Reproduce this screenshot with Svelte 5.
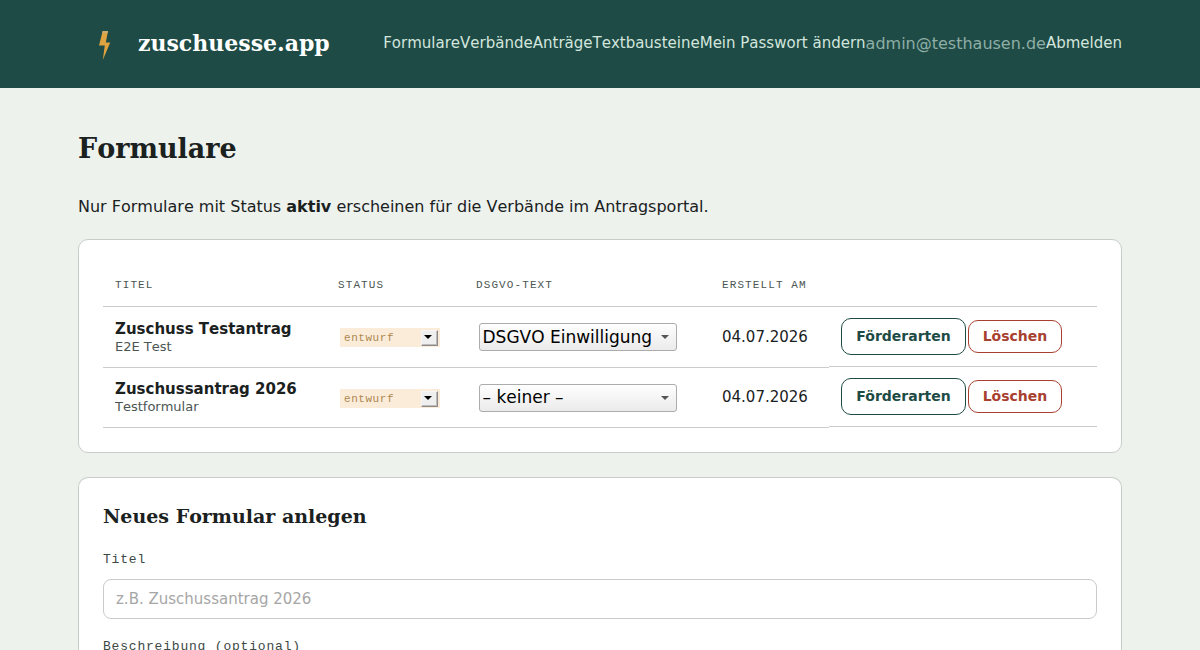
<script lang="ts">
  type Formular = {
    titel: string;
    beschreibung: string;
    status: string;
    dsgvo: string;
    erstellt: string;
  };

  const links = ['Formulare', 'Verbände', 'Anträge', 'Textbausteine', 'Mein Passwort ändern'];
  const stati = ['entwurf', 'aktiv', 'archiviert'];
  const texte = ['– keiner –', 'DSGVO Einwilligung'];

  let formulare: Formular[] = $state([
    {
      titel: 'Zuschuss Testantrag',
      beschreibung: 'E2E Test',
      status: 'entwurf',
      dsgvo: 'DSGVO Einwilligung',
      erstellt: '04.07.2026',
    },
    {
      titel: 'Zuschussantrag 2026',
      beschreibung: 'Testformular',
      status: 'entwurf',
      dsgvo: '– keiner –',
      erstellt: '04.07.2026',
    },
  ]);
  let titel = $state('');

  function loeschen(f: Formular) {
    formulare = formulare.filter((x) => x !== f);
  }
</script>

<header>
  <a class="brand" href="#top">
    <svg class="bolt" width="52" height="52" viewBox="0 0 52 52" aria-hidden="true">
      <path d="M24.7 13H30L27.8 24.6H32.2L24.8 42L26.8 27.4H21Z" fill="#e0a341" />
      <path d="M24.7 13H30L29.6 15H24.2Z" fill="#c9ad72" />
    </svg>
    <span class="name">zuschuesse.app</span>
  </a>
  <nav>
    {#each links as link}
      <a href="#top">{link}</a>
    {/each}
    <span class="user">admin@testhausen.de</span>
    <a href="#top">Abmelden</a>
  </nav>
</header>

<main>
  <h1>Formulare</h1>
  <p class="intro">Nur Formulare mit Status <strong>aktiv</strong> erscheinen für die Verbände im Antragsportal.</p>

  <section class="card list">
    <div class="row head">
      <span>Titel</span>
      <span>Status</span>
      <span>DSGVO-Text</span>
      <span>Erstellt am</span>
      <span></span>
    </div>
    {#each formulare as f}
      <div class="row">
        <div class="cell title">
          <strong>{f.titel}</strong>
          <small>{f.beschreibung}</small>
        </div>
        <div class="cell">
          <div class="status">
            <select bind:value={f.status} aria-label="Status">
              {#each stati as s}<option>{s}</option>{/each}
            </select>
            <span class="drop"><i></i></span>
          </div>
        </div>
        <div class="cell">
          <div class="dsgvo">
            <select bind:value={f.dsgvo} aria-label="DSGVO-Text">
              {#each texte as t}<option>{t}</option>{/each}
            </select>
            <i></i>
          </div>
        </div>
        <div class="cell date">{f.erstellt}</div>
        <div class="cell actions">
          <button class="btn">Förderarten</button>
          <button class="btn danger" onclick={() => loeschen(f)}>Löschen</button>
        </div>
      </div>
    {/each}
  </section>

  <section class="card form">
    <h2>Neues Formular anlegen</h2>
    <label for="titel">Titel</label>
    <input id="titel" placeholder="z.B. Zuschussantrag 2026" bind:value={titel} />
    <label for="beschreibung">Beschreibung (optional)</label>
  </section>
</main>

<style>
  :global(body) {
    background: #edf2ed;
    font-family: 'DejaVu Sans', sans-serif;
    font-size: 16px;
    font-kerning: none;
    color: #1a211e;
  }

  header {
    display: flex;
    justify-content: space-between;
    align-items: center;
    box-sizing: border-box;
    height: 88px;
    padding: 0 78px;
    background: #1e4b45;
  }

  .brand {
    display: flex;
    align-items: center;
    gap: 8px;
    color: #fff;
    text-decoration: none;
  }

  .name {
    font: bold 22px/30px 'DejaVu Serif', serif;
    margin-bottom: 2px;
  }

  nav {
    display: flex;
    align-items: baseline;
    margin-bottom: 3px;
    font-kerning: none;
  }

  nav a {
    color: #d3e5dd;
    font-size: 15px;
    text-decoration: none;
  }

  .user {
    color: #8eaea6;
    position: relative;
    top: 1px;
  }

  main {
    display: flex;
    flex-direction: column;
    box-sizing: border-box;
    height: 562px;
    padding: 0 78px;
    overflow: hidden;
  }

  h1 {
    margin: 0;
    padding-top: 41px;
    font: bold 27px/40px 'DejaVu Serif', serif;
    font-kerning: none;
  }

  .intro {
    margin: 25px 0 20px;
    line-height: 25px;
    font-kerning: none;
  }

  .card {
    box-sizing: border-box;
    flex: none;
    margin-bottom: 24px;
    padding: 24px;
    border: 1px solid #c8cdc9;
    border-radius: 10px;
    background: #fff;
  }

  .list {
    padding-bottom: 25px;
  }

  /* the form card runs on to the lower edge of the window */
  .form {
    flex: 1;
    min-height: 0;
    margin-bottom: 0;
    padding: 23px 24px 0;
    border-bottom: 0;
    border-radius: 10px 10px 0 0;
    overflow: hidden;
  }

  .row {
    display: grid;
    grid-template-columns: 223px 138px 246px 119px 268px;
    height: 60px;
  }

  .head {
    box-sizing: border-box;
    height: 43px;
    border-bottom: 1px solid #c8cdc9;
    font: 11px/42px 'Courier New', 'Liberation Mono', monospace;
    letter-spacing: 1.1px;
    text-transform: uppercase;
    color: #4b5652;
  }

  .head span {
    padding-left: 12px;
  }

  .cell {
    box-sizing: border-box;
    height: 61px;
    padding: 16px 12px 0;
    border-bottom: 1px solid #c8cdc9;
    white-space: nowrap;
    font-kerning: none;
  }

  .title {
    padding-top: 13px;
  }

  .title strong,
  .title small {
    display: block;
  }

  .title strong {
    font-size: 15px;
    line-height: 18px;
  }

  .title small {
    font-size: 13px;
    line-height: 18px;
    color: #4b5652;
  }

  .date {
    padding-top: 20px;
    font-size: 15px;
    line-height: 20px;
  }

  .actions {
    display: flex;
    align-items: center;
    gap: 2px;
    height: 60px;
    padding-top: 0;
  }

  select {
    appearance: none;
    box-sizing: border-box;
    display: block;
    width: 100%;
    height: 100%;
    margin: 0;
    border: 0;
    border-radius: 0;
    background: none;
    color: inherit;
    font: inherit;
    letter-spacing: inherit;
    outline: none;
  }

  .status {
    display: flex;
    align-items: center;
    box-sizing: border-box;
    width: 100px;
    height: 19px;
    margin: 5px 0 0 2px;
    padding: 0 2px 0 4px;
    background: #fbecda;
    color: #ad884f;
    font: 11px/19px 'Courier New', 'Liberation Mono', monospace;
    letter-spacing: 0.55px;
  }

  .status select {
    padding: 1px 0 0;
  }

  .drop {
    flex: none;
    display: grid;
    place-items: center;
    box-sizing: border-box;
    width: 17px;
    height: 16px;
    padding: 0 3px 2px 0;
    border: 1px solid #f7f5f5;
    border-right-color: #8c8b89;
    border-bottom-color: #8c8b89;
    box-shadow: inset -1px -1px #bdbcba;
    background: #f0efef;
  }

  .drop i {
    border: 4px solid transparent;
    border-top-color: #000;
    border-bottom: 0;
  }

  .dsgvo {
    display: flex;
    align-items: center;
    box-sizing: border-box;
    width: 198px;
    height: 28px;
    margin-left: 3px;
    padding: 0 7px 0 2.5px;
    border: 1px solid #acacac;
    border-radius: 3px;
    background: linear-gradient(#fefefe, #ebebeb);
    color: #000;
    font-size: 17px;
  }

  .dsgvo select {
    padding: 0 0 1px;
  }

  .dsgvo i {
    flex: none;
    border: 4px solid transparent;
    border-top-color: #555;
    border-bottom: 0;
  }

  .row:last-child .status {
    margin-top: 6px;
  }

  .row:last-child .dsgvo {
    margin-top: 1px;
  }

  .row:last-child .dsgvo select {
    padding-bottom: 3px;
  }

  .btn {
    box-sizing: border-box;
    width: 125px;
    height: 37px;
    padding: 0 0 2px;
    border: 1px solid #1e4b45;
    border-radius: 10px;
    background: #fff;
    color: #1e4b45;
    font: bold 14px 'DejaVu Sans', sans-serif;
  }

  .danger {
    width: 94px;
    height: 33px;
    border-color: #a8402f;
    color: #a8402f;
  }

  h2 {
    margin: 0 0 21px;
    font: bold 19px/30px 'DejaVu Serif', serif;
    font-kerning: none;
  }

  label {
    display: block;
    margin-bottom: 11px;
    font: 13px/16px 'Courier New', 'Liberation Mono', monospace;
    letter-spacing: 0.8px;
    color: #3d4844;
  }

  input {
    display: block;
    box-sizing: border-box;
    width: 100%;
    height: 40px;
    margin: 0 0 20px;
    padding: 0 12px;
    border: 1px solid #c8cdc9;
    border-radius: 8px;
    background: #fff;
    font: 15px 'DejaVu Sans', sans-serif;
  }

  input::placeholder {
    color: #a6a6a6;
  }
</style>
